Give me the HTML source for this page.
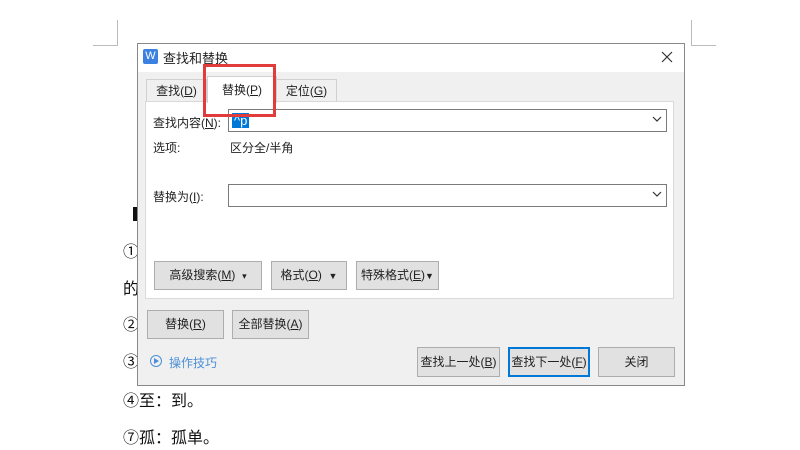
<!DOCTYPE html>
<html><head><meta charset="utf-8"><style>
*{margin:0;padding:0;box-sizing:border-box}
body{width:800px;height:450px;background:#fff;position:relative;overflow:hidden;font-family:"Liberation Sans","Noto Sans CJK SC",sans-serif;font-size:12px;color:#222}
.a{position:absolute}
.doc{font-size:16px;color:#111;left:123px}
.btn{position:absolute;background:#e1e1e1;border:1px solid #adadad;text-align:center;line-height:26px;font-size:12px;color:#222}
.inp{position:absolute;background:#fff;border:1px solid #7a7a7a;height:23px}
.arr{position:absolute;right:4px;top:4px;width:10px;height:10px}
u{text-decoration:underline}
</style></head><body>
<div class="a" style="left:93px;top:45px;width:25px;height:1px;background:#bbb"></div>
<div class="a" style="left:117px;top:20px;width:1px;height:26px;background:#bbb"></div>
<div class="a" style="left:691px;top:45px;width:25px;height:1px;background:#bbb"></div>
<div class="a" style="left:691px;top:20px;width:1px;height:26px;background:#bbb"></div>
<div class="a" style="left:133px;top:207px;width:4px;height:14px;background:#111"></div>
<div class="a doc" style="top:238px">①</div>
<div class="a doc" style="top:275px">的</div>
<div class="a doc" style="top:311px">②</div>
<div class="a doc" style="top:348px">③</div>
<div class="a doc" style="top:387px">④至：到。</div>
<div class="a doc" style="top:424px">⑦孤：孤单。</div>

<div class="a" style="left:137px;top:43px;width:548px;height:343px;background:#f0f0f0;border:1px solid #888">
 <div class="a" style="left:0;top:0;width:546px;height:28px;background:#fff"></div>
 <div class="a" style="left:5px;top:5px;width:15px;height:15px;background:#3b82e0;border-radius:2px;color:#fff;font-size:11px;line-height:15px;text-align:center">W</div>
 <div class="a" style="left:25px;top:4px;font-size:13px">查找和替换</div>
 <svg class="a" style="left:523px;top:7px" width="12" height="12" viewBox="0 0 12 12"><path d="M1 1L11 11M11 1L1 11" stroke="#333" stroke-width="1.2"/></svg>
 <div class="a" style="left:8px;top:35px;width:61px;height:23px;border:1px solid #d0d0d0;border-bottom:none;background:#f0f0f0;text-align:center;line-height:22px">查找(<u>D</u>)</div>
 <div class="a" style="left:138px;top:35px;width:61px;height:23px;border:1px solid #d0d0d0;border-bottom:none;background:#f0f0f0;text-align:center;line-height:22px">定位(<u>G</u>)</div>
 <div class="a" style="left:7px;top:57px;width:529px;height:198px;background:#fff;border:1px solid #d9d9d9"></div>
 <div class="a" style="left:69px;top:32px;width:70px;height:27px;background:#fff;border:1px solid #d0d0d0;border-bottom:none;text-align:center;line-height:26px">替换(<u>P</u>)</div>
 <div class="a" style="left:15px;top:70px">查找内容(<u>N</u>):</div>
 <div class="inp" style="left:90px;top:65px;width:439px"><span class="a" style="left:3px;top:3px;background:#0078d7;color:#fff;font-size:13px;line-height:15px;padding:0 2px">^p</span><svg class="arr" viewBox="0 0 10 10"><path d="M1 3l4 4 4-4" fill="none" stroke="#333" stroke-width="1.2"/></svg></div>
 <div class="a" style="left:15px;top:95px">选项:</div>
 <div class="a" style="left:92px;top:95px">区分全/半角</div>
 <div class="a" style="left:15px;top:144px">替换为(<u>I</u>):</div>
 <div class="inp" style="left:90px;top:140px;width:439px"><svg class="arr" viewBox="0 0 10 10"><path d="M1 3l4 4 4-4" fill="none" stroke="#333" stroke-width="1.2"/></svg></div>
 <div class="btn" style="left:16px;top:217px;width:108px;height:29px">高级搜索(<u>M</u>) &nbsp;<span style="font-size:9px">▾</span></div>
 <div class="btn" style="left:133px;top:217px;width:76px;height:29px">格式(<u>O</u>) &nbsp;<span style="font-size:9px">▼</span></div>
 <div class="btn" style="left:218px;top:217px;width:83px;height:29px">特殊格式(<u>E</u>)<span style="font-size:9px">▼</span></div>
 <div class="btn" style="left:9px;top:266px;width:77px;height:29px">替换(<u>R</u>)</div>
 <div class="btn" style="left:94px;top:266px;width:77px;height:29px">全部替换(<u>A</u>)</div>
 <div class="a" style="left:12px;top:311px;width:12px;height:12px;border:1px solid #4a8fd8;border-radius:50%"></div>
 <div class="a" style="left:16px;top:314px;width:0;height:0;border-left:5px solid #4a8fd8;border-top:3px solid transparent;border-bottom:3px solid transparent"></div>
 <div class="a" style="left:31px;top:310px;color:#4a8fd8">操作技巧</div>
 <div class="btn" style="left:279px;top:303px;width:83px;height:30px;line-height:28px">查找上一处(<u>B</u>)</div>
 <div class="btn" style="left:370px;top:303px;width:82px;height:30px;line-height:26px;border:2px solid #0078d7">查找下一处(<u>F</u>)</div>
 <div class="btn" style="left:460px;top:303px;width:77px;height:30px;line-height:28px">关闭</div>
</div>
<div class="a" style="left:203px;top:64px;width:73px;height:53px;border:3px solid #e23b3b"></div>
</body></html>
